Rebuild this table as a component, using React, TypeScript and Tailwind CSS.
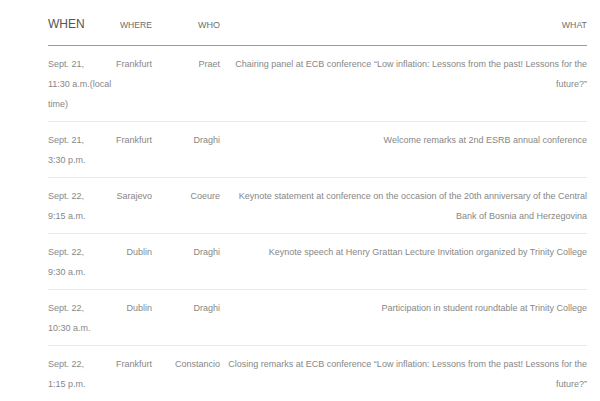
const rows = [
  {
    date: "Sept. 21,",
    time: "11:30 a.m.(local time)",
    where: "Frankfurt",
    who: "Praet",
    what: "Chairing panel at ECB conference \u201cLow inflation: Lessons from the past! Lessons for the future?\u201d",
  },
  { date: "Sept. 21,", time: "3:30 p.m.", where: "Frankfurt", who: "Draghi", what: "Welcome remarks at 2nd ESRB annual conference" },
  {
    date: "Sept. 22,",
    time: "9:15 a.m.",
    where: "Sarajevo",
    who: "Coeure",
    what: "Keynote statement at conference on the occasion of the 20th anniversary of the Central Bank of Bosnia and Herzegovina",
  },
  {
    date: "Sept. 22,",
    time: "9:30 a.m.",
    where: "Dublin",
    who: "Draghi",
    what: "Keynote speech at Henry Grattan Lecture Invitation organized by Trinity College",
  },
  { date: "Sept. 22,", time: "10:30 a.m.", where: "Dublin", who: "Draghi", what: "Participation in student roundtable at Trinity College" },
  {
    date: "Sept. 22,",
    time: "1:15 p.m.",
    where: "Frankfurt",
    who: "Constancio",
    what: "Closing remarks at ECB conference \u201cLow inflation: Lessons from the past! Lessons for the future?\u201d",
  },
]

export default function App() {
  return (
    <div className="w-[600px] h-[401px] overflow-hidden bg-white font-['Liberation_Sans',Arial,sans-serif]">
      <div className="ml-[48px] w-[539px]">
        <div className="grid grid-cols-[66px_38px_68px_1fr] items-baseline pt-4 pb-[12px] border-b border-[#9a9a9a] text-[#6e6e6e]">
          <div className="text-[12px] leading-4 text-[#555]">WHEN</div>
          <div className="text-right text-[8.6px]">WHERE</div>
          <div className="text-right text-[9px]">WHO</div>
          <div className="text-right text-[8.8px]">WHAT</div>
        </div>
        {rows.map((r, i) => (
          <div
            key={i}
            className="grid grid-cols-[66px_38px_68px_1fr] pt-2 pb-[7px] border-b border-[#e8e8e8] text-[9px] leading-5 text-[#878787]"
          >
            <div>
              {r.date}
              <br />
              {r.time}
            </div>
            <div className="text-right">{r.where}</div>
            <div className="text-right">{r.who}</div>
            <div className="text-right pl-[3px]">{r.what}</div>
          </div>
        ))}
      </div>
    </div>
  )
}
